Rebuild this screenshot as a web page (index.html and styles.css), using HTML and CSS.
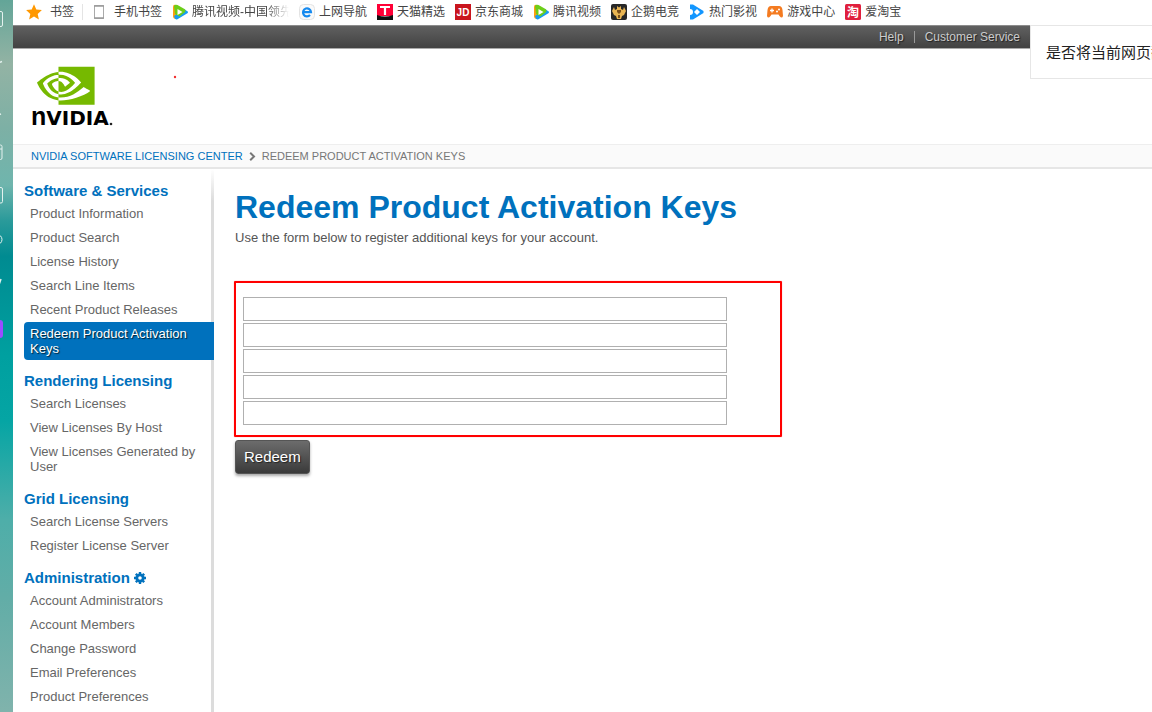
FILE: index.html
```html
<!DOCTYPE html>
<html lang="en">
<head>
<meta charset="utf-8">
<title>Redeem Product Activation Keys</title>
<link rel="stylesheet" href="styles.css">
</head>
<body>
<div class="dock" aria-hidden="true">
  <svg width="13" height="345" viewBox="0 0 13 345" fill="none" stroke="#e4f2ef" stroke-width="1">
    <path d="M-4 11.500H1q1.500 0 1.500 1.500V25q0 1.500-1.500 1.500H-4"/>
    <path d="M-2 63L2 61.500M-2 115L1 114" stroke-width="1.500"/>
    <path d="M-4 145H.5Q2 145 2 146.500V158q0 1.500-1.500 1.500H-4M-4 149H2"/>
    <path d="M-4 187.500H1q1.500 0 1.500 1.500v12.500q0 1.500-1.500 1.500H-4"/>
    <circle cx="-3" cy="239.500" r="5"/>
    <path d="M1 279L-2 288" stroke-width="1.500"/>
    <rect x="-12" y="320" width="15" height="18" rx="3" fill="#9b4dff" stroke="none"/>
  </svg>
</div>
<div class="window">
  <nav class="bookmarks" lang="zh-CN" aria-label="书签">
    <a class="bookmark bookmark-root" href="#"><svg class="mark" viewBox="0 0 16 16"><path fill="#ff9800" d="M8 .3l2.300 5.200 5.600.6-4.200 3.800 1.200 5.600L8 12.600l-4.900 2.900 1.200-5.600L.1 6.100l5.600-.6z"/></svg><span>书签</span></a>
    <a class="bookmark bookmark-phone" href="#"><svg class="mark" viewBox="0 0 16 16"><path d="M3.500 1.500h9v13h-9z" fill="#fff" stroke="#aaa"/><path d="M3 2h10M3 14h10" stroke="#999" stroke-width="1.500"/></svg><span>手机书签</span></a>
    <a class="bookmark" href="#"><svg class="mark" viewBox="0 0 16 16"><path fill="#ff9d12" d="M1 3Q1 0 4 1l4 2v10l-4 2q-3 0-3-3z"/><path fill="#169cf4" d="M2 12l10-7 3 2q2 1 0 2.500L5 15.500q-2 .5-3-3.500z"/><path fill="#6ccf19" d="M2 2q1-2 3.500-1l7 4q2 1.500 0 3.500l-5 4L3 10z"/><path fill="#fff" d="M5.500 5v6l5-3z"/></svg><span class="faded">腾讯视频-中国领先</span></a>
    <a class="bookmark" href="#"><svg class="mark" viewBox="0 0 16 16"><rect x=".5" y=".5" width="15" height="15" rx="4" fill="#fafafa" stroke="#e3e3e3"/><path d="M4 8.200h8A4 4 0 1 0 11 11" fill="none" stroke="#168aef" stroke-width="2.200"/></svg><span>上网导航</span></a>
    <a class="bookmark" href="#"><svg class="mark" viewBox="0 0 16 16"><path fill="#ff0036" d="M0 0h16v12H0z"/><path fill="#111" d="M0 11q8 3 16 0v5H0z"/><path fill="none" stroke="#fff" stroke-width="2.200" d="M3 3h10M8 3v8"/></svg><span>天猫精选</span></a>
    <a class="bookmark" href="#"><svg class="mark" viewBox="0 0 16 16"><path fill="#c9151e" d="M0 0h16v16H0z"/><text class="jd" x="8" y="12" text-anchor="middle">JD</text></svg><span>京东商城</span></a>
    <a class="bookmark" href="#"><svg class="mark" viewBox="0 0 16 16"><path fill="#ff9d12" d="M1 3Q1 0 4 1l4 2v10l-4 2q-3 0-3-3z"/><path fill="#169cf4" d="M2 12l10-7 3 2q2 1 0 2.500L5 15.500q-2 .5-3-3.500z"/><path fill="#6ccf19" d="M2 2q1-2 3.500-1l7 4q2 1.500 0 3.500l-5 4L3 10z"/><path fill="#fff" d="M5.500 5v6l5-3z"/></svg><span>腾讯视频</span></a>
    <a class="bookmark" href="#"><svg class="mark" viewBox="0 0 16 16"><rect width="16" height="16" rx="2" fill="#272727"/><path fill="#e9b552" d="M6 2l2 1.500L10 2v3l2 1 1-3 2 4-2 4-2 1-1 3H6l-1-3-2-1-2-4 2-4 1 3 2-1z"/><path fill="#7a501b" d="M6 6h4v2l-2 2-2-2zM7 11h2v3H7z"/></svg><span>企鹅电竞</span></a>
    <a class="bookmark" href="#"><svg class="mark" viewBox="0 0 16 16"><path fill="#1296ff" d="M1 .5h3L14.500 7v2L4 15.500H1v-4.500a3 3 0 0 0 0-6z"/><path fill="#fff" d="M5 8l3-3 3 3-3 3z"/></svg><span>热门影视</span></a>
    <a class="bookmark" href="#"><svg class="mark" viewBox="0 0 16 16"><path fill="#f47b20" d="M4 2h8q3 0 3.500 4l.5 6q-1 3-3.500 0l-1-1.500h-7l-1 1.500Q1 15 0 12l.5-6Q1 2 4 2z"/><path d="M5 4.500v4M3 6.500h4" stroke="#fff" stroke-width="1.300"/><circle cx="10" cy="7.500" r="1" fill="#fff"/><circle cx="12" cy="5.500" r="1" fill="#fff"/></svg><span>游戏中心</span></a>
    <a class="bookmark" href="#"><svg class="mark" viewBox="0 0 16 16"><rect width="16" height="16" rx="1.500" fill="#e01f3d"/><text class="tao" x="8" y="12.500" text-anchor="middle">淘</text></svg><span>爱淘宝</span></a>
  </nav>

  <div class="utility">
    <a href="#">Help</a>
    <a href="#">Customer Service</a>
  </div>
  <aside class="translate" lang="zh-CN">是否将当前网页翻</aside>

  <header class="masthead">
    <a href="#" aria-label="NVIDIA">
      <svg class="logo" width="84" height="62" viewBox="0 0 84 62">
        <path transform="translate(6 -9) scale(2.400)" fill="#76b900" d="M8.948 8.798v-1.430a6.700 6.700 0 0 1 .424-.018c3.922-.124 6.493 3.374 6.493 3.374s-2.774 3.851-5.750 3.851c-.398 0-.787-.062-1.158-.185v-4.346c1.528.185 1.837.857 2.747 2.385l2.040-1.714s-1.492-1.952-4-1.952a6.016 6.016 0 0 0-.796.035m0-4.735v2.138l.424-.027c5.450-.185 9.010 4.470 9.010 4.470s-4.080 4.964-8.330 4.964c-.370 0-.733-.035-1.095-.097v1.325c.3.035.61.062.91.062 3.957 0 6.820-2.023 9.593-4.408.459.371 2.340 1.263 2.730 1.652-2.633 2.208-8.772 3.984-12.253 3.984-.335 0-.653-.018-.971-.053v1.864H24V4.063zm0 10.326v1.131c-3.657-.654-4.673-4.460-4.673-4.460s1.758-1.944 4.673-2.262v1.237H8.940c-1.528-.186-2.730 1.245-2.730 1.245s.68 2.412 2.739 3.110M2.456 10.900s2.164-3.197 6.500-3.533V6.201C4.153 6.590 0 10.653 0 10.653s2.350 6.802 8.948 7.420v-1.237c-4.840-.6-6.492-5.936-6.492-5.936z"/>
        <text class="wordmark" x="0" y="59"><tspan class="wordmark-n">n</tspan>VIDIA</text>
        <circle cx="80" cy="58" r="1.300" fill="#222"/>
      </svg>
    </a>
    <svg class="dot" width="4" height="4" viewBox="0 0 4 4"><circle cx="2" cy="2" r="1.200" fill="#f03030"/></svg>
  </header>

  <nav class="crumbs" aria-label="Breadcrumb">
    <a href="#">NVIDIA SOFTWARE LICENSING CENTER</a>
    <svg width="7" height="9" viewBox="0 0 7 9"><path d="M1.200 .8L5 4.500 1.200 8.200" fill="none" stroke="#777" stroke-width="2"/></svg>
    <span>REDEEM PRODUCT ACTIVATION KEYS</span>
  </nav>

  <div class="columns">
    <nav class="sidebar" aria-label="Licensing">
      <h2>Software &amp; Services</h2>
      <ul>
        <li><a href="#">Product Information</a></li>
        <li><a href="#">Product Search</a></li>
        <li><a href="#">License History</a></li>
        <li><a href="#">Search Line Items</a></li>
        <li><a href="#">Recent Product Releases</a></li>
        <li><a class="current" href="#" aria-current="page">Redeem Product Activation Keys</a></li>
      </ul>
      <h2>Rendering Licensing</h2>
      <ul>
        <li><a href="#">Search Licenses</a></li>
        <li><a href="#">View Licenses By Host</a></li>
        <li><a href="#">View Licenses Generated by User</a></li>
      </ul>
      <h2>Grid Licensing</h2>
      <ul>
        <li><a href="#">Search License Servers</a></li>
        <li><a href="#">Register License Server</a></li>
      </ul>
      <h2>Administration <svg class="gear" width="12" height="12" viewBox="0 0 12 12" fill="none" stroke="#0071bd"><circle cx="6" cy="6" r="3.200" stroke-width="2.800"/><path d="M6 0v2M6 10v2M0 6h2M10 6h2M1.800 1.800l1.400 1.400M8.800 8.800l1.400 1.400M1.800 10.200l1.400-1.400M8.800 3.200l1.400-1.400" stroke-width="2.400"/></svg></h2>
      <ul>
        <li><a href="#">Account Administrators</a></li>
        <li><a href="#">Account Members</a></li>
        <li><a href="#">Change Password</a></li>
        <li><a href="#">Email Preferences</a></li>
        <li><a href="#">Product Preferences</a></li>
      </ul>
    </nav>
    <main class="content">
      <h1>Redeem Product Activation Keys</h1>
      <p>Use the form below to register additional keys for your account.</p>
      <form>
        <div class="keys">
          <input type="text" aria-label="Product activation key 1">
          <input type="text" aria-label="Product activation key 2">
          <input type="text" aria-label="Product activation key 3">
          <input type="text" aria-label="Product activation key 4">
          <input type="text" aria-label="Product activation key 5">
        </div>
        <button class="redeem" type="submit">Redeem</button>
      </form>
    </main>
  </div>
</div>
</body>
</html>
```

FILE: styles.css
```css
* {
  box-sizing: border-box;
}

body {
  display: flex;
  min-height: 100vh;
  margin: 0;
  background: #fff;
  color: #666;
  font-family: "Liberation Sans", Arial, sans-serif;
  font-size: 13px;
}

a {
  color: inherit;
  text-decoration: none;
}

.dock {
  flex: 0 0 13px;
  overflow: hidden;
  background: linear-gradient(#63a598, #93b3a4 9%, #7db0a5 18%, #6fb5ad 26%, #2a9a9a 31%, #008b91 36%, #00a0a0 50%, #05a5a4 59%, #4eaea9 73%, #62ada7 84%, #80b3ac);
}

.dock svg {
  display: block;
}

.window {
  position: relative;
  display: flex;
  flex: 1;
  flex-direction: column;
  min-width: 0;
}

.bookmarks {
  display: flex;
  align-items: center;
  gap: 10px;
  height: 25px;
  padding-left: 13px;
  padding-bottom: 1px;
  overflow: hidden;
  color: #444;
  font-family: "Liberation Sans", "Noto Sans CJK SC", sans-serif;
  font-size: 12px;
  line-height: 24px;
  white-space: nowrap;
}

.bookmark {
  display: flex;
  flex: none;
  align-items: center;
  gap: 4px;
}

.bookmark-root {
  gap: 8px;
  padding-right: 9px;
  background: linear-gradient(#e4e4e4, #e4e4e4) right / 1px 16px no-repeat;
}

.bookmark-phone {
  gap: 7px;
  margin-left: -2px;
}

.mark {
  width: 16px;
  height: 16px;
}

.jd {
  fill: #fff;
  font: bold 10px "Liberation Sans", sans-serif;
}

.tao {
  fill: #fff;
  font: bold 12px "Noto Sans CJK SC", sans-serif;
}

.faded {
  width: 97px;
  overflow: hidden;
  mask-image: linear-gradient(to right, #000 76%, transparent);
}

.utility {
  display: flex;
  align-items: center;
  justify-content: flex-end;
  height: 24px;
  padding-right: 132px;
  border-top: 1px solid #8c8c8c;
  border-bottom: 1px solid #aaa;
  background: linear-gradient(#606060, #424242);
  color: #ccc;
  font-size: 12px;
  line-height: 12px;
  text-shadow: 1px 1px 1px #222;
}

.utility a + a {
  margin-left: 10px;
  padding-left: 10px;
  border-left: 1px solid #999;
}

.translate {
  position: absolute;
  top: 25px;
  right: 0;
  width: 122px;
  padding: 14px 0 15px 15px;
  overflow: hidden;
  border: 1px solid #e6e6e6;
  border-right: 0;
  background: #fff;
  color: #222;
  font-family: "Noto Sans CJK SC", sans-serif;
  font-size: 15px;
  line-height: 23px;
  white-space: nowrap;
}

.masthead {
  display: flex;
  align-items: flex-start;
  gap: 58px;
  height: 95px;
  padding: 17px 18px 0;
}

.logo {
  display: block;
}

.wordmark {
  fill: #000;
  font: bold 20px "DejaVu Sans", sans-serif;
}

.wordmark-n {
  font: bold 25px "Liberation Sans", sans-serif;
}

.dot {
  margin-top: 9px;
}

.crumbs {
  display: flex;
  align-items: center;
  gap: 6px;
  height: 25px;
  padding: 0 18px;
  border-top: 1px solid #eee;
  border-bottom: 2px solid #e6e6e6;
  background: #fafafa;
  color: #777;
  font-size: 11px;
}

.crumbs a {
  color: #0071bd;
}

.columns {
  display: flex;
  flex: 1;
}

.sidebar {
  flex: 0 0 201px;
  padding: 11px 0 0 11px;
  background: linear-gradient(#fff, #dcdcdc 32px) right / 3px 100% no-repeat;
}

.sidebar h2 {
  margin: 10px 0 0;
  color: #0071bd;
  font-size: 15px;
  line-height: 22px;
}

.sidebar h2:first-child {
  margin-top: 0;
}

.gear {
  vertical-align: -1px;
}

.sidebar ul {
  display: flex;
  flex-direction: column;
  gap: 1px;
  margin: 0;
  padding: 0;
  list-style: none;
}

.sidebar li a {
  display: block;
  padding: 4px 12px 4px 6px;
  line-height: 15px;
}

.sidebar .current {
  border-radius: 4px 0 0 4px;
  background: #0071bd;
  color: #fff;
  text-shadow: 1px 1px 1px #023;
}

.content {
  flex: 1;
  min-width: 0;
  padding: 19px 21px;
}

h1 {
  margin: 0;
  color: #0071bd;
  font-size: 32px;
  line-height: 38px;
}

.content p {
  margin: 4px 0 35px;
  color: #555;
  line-height: 16px;
}

.keys {
  display: flex;
  flex-direction: column;
  gap: 2px;
  max-width: 548px;
  margin-left: -1px;
  padding: 14px 53px 10px 7px;
  border: 2px solid #f00;
  border-radius: 1px;
  box-shadow: 0 0 1px #f66;
}

.keys input {
  width: 100%;
  height: 24px;
  padding: 2px 6px;
  border: 1px solid #b0b0b0;
  background: #fff;
  font: inherit;
}

.redeem {
  display: block;
  height: 34px;
  margin-top: 3px;
  padding: 0 8px 1px;
  border: 1px solid #555;
  border-radius: 3px;
  background: linear-gradient(#6c6c6c, #3a3a3a);
  box-shadow: 0 2px 3px #aaa;
  color: #fff;
  font-family: inherit;
  font-size: 15px;
  text-shadow: 1px 1px 1px #222;
}
```
